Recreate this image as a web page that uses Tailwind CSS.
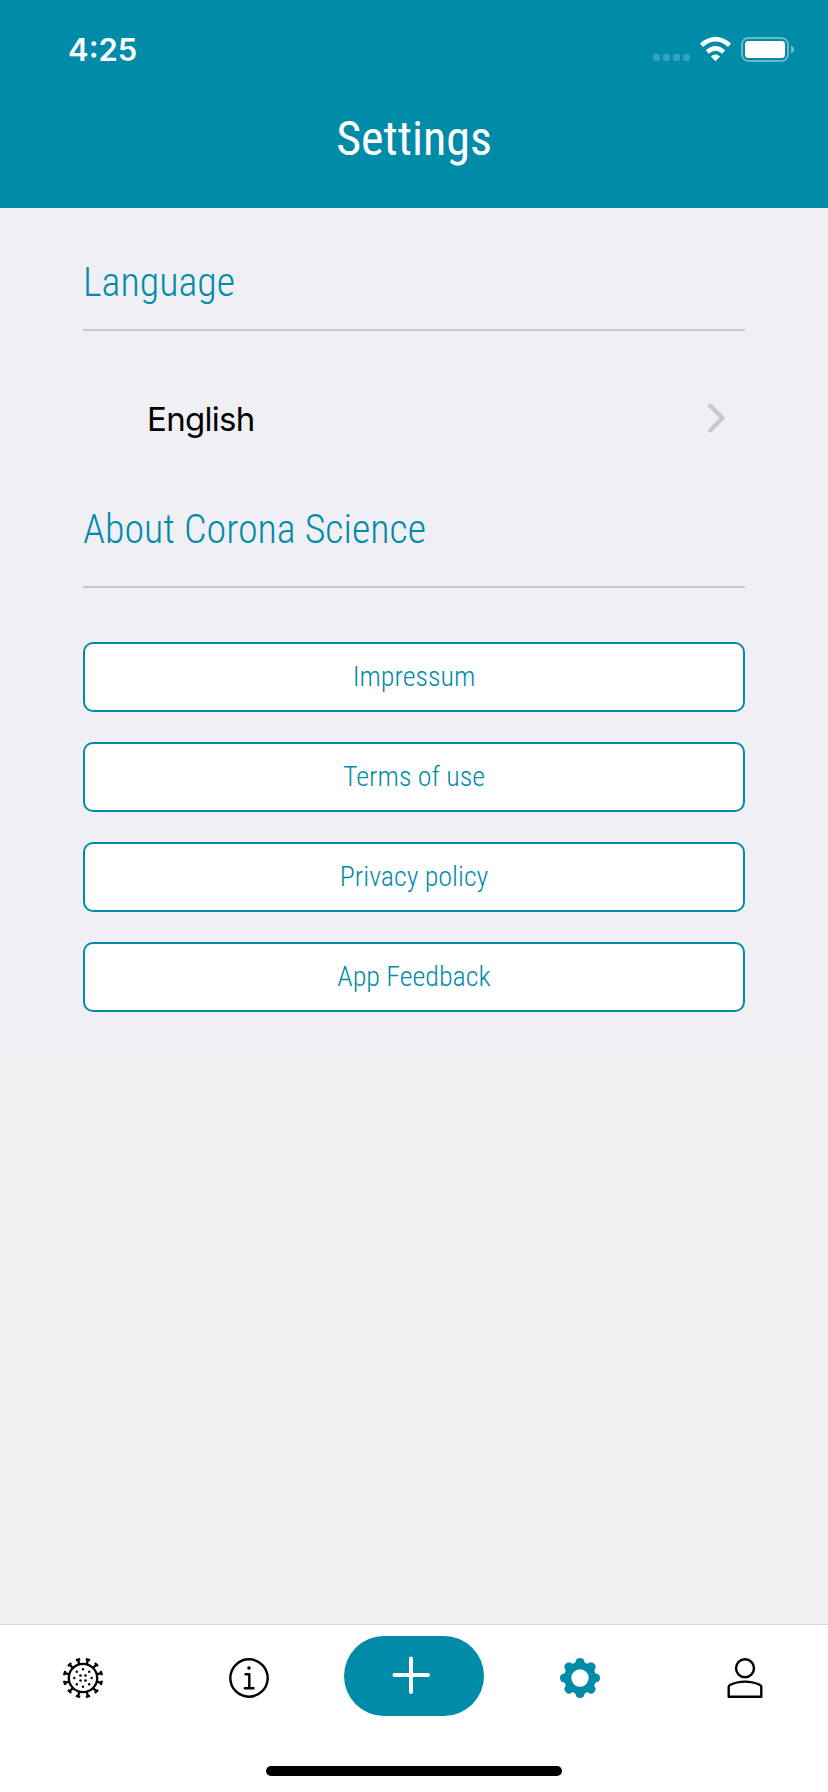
<!DOCTYPE html>
<html lang="en">
<head>
<meta charset="utf-8">
<title>Settings</title>
<script src="https://cdn.jsdelivr.net/npm/@tailwindcss/browser@4"></script>
</head>
<body class="bg-[#f1f1f1]">
<div class="w-[828px] h-[1792px] flex flex-col overflow-hidden font-['Roboto',sans-serif] font-stretch-condensed">
  <header class="h-52 bg-[#008ba9] text-white flex flex-col">
    <div class="h-[100px] flex justify-between pl-[68px] pr-[34px]">
      <div class="font-['Inter',sans-serif] font-stretch-normal font-semibold text-[31px] leading-[100px]">4:25</div>
      <svg class="w-[142px] h-[100px]" viewBox="652 0 142 100" fill="none">
        <g fill="#fff" fill-opacity=".2"><rect x="653" y="54" width="7" height="7" rx="2"/><rect x="663" y="54" width="7" height="7" rx="2"/><rect x="673" y="54" width="7" height="7" rx="2"/><rect x="683" y="54" width="7" height="7" rx="2"/></g>
        <path d="M701.500 45.200Q715.500 33 729.500 45.200M707.300 52Q715.500 44.800 723.700 52" stroke="#fff" stroke-width="4.600"/>
        <path d="M715.500 61.200l-4.600-4.700q4.600-3.900 9.200 0z" fill="#fff"/>
        <rect x="742" y="38" width="46" height="23" rx="6.500" stroke="#fff" stroke-opacity=".4" stroke-width="2"/>
        <rect x="745" y="41" width="40" height="17" rx="3.500" fill="#fff"/>
        <path d="M791 45.500q3 1.200 3 4t-3 4z" fill="#fff" fill-opacity=".45"/>
      </svg>
    </div>
    <h1 class="text-center text-[48px] leading-[78px] font-[370]">Settings</h1>
  </header>

  <main class="h-[853px] bg-[#efeff4] px-[83px] text-[#008ba9] font-light">
    <h2 class="h-[123px] pt-[45px] border-b-2 border-[#c8c8cc] text-[40px] leading-[60px]">Language</h2>
    <div class="h-[168px] pl-[64px] pr-[20px] pt-[10px] flex items-center justify-between font-['Inter',sans-serif] font-stretch-normal font-normal text-black text-[33px] tracking-[-0.7px]">
      <span>English</span>
      <svg class="w-[18px] h-[30px] -mt-1" viewBox="0 0 18 30" fill="none" stroke="#c7c7cc" stroke-width="4" stroke-linecap="round" stroke-linejoin="round"><path d="M3 2.500L15.500 15L3 27.500"/></svg>
    </div>
    <h2 class="h-[89px] border-b-2 border-[#c8c8cc] text-[40px] leading-[62px]">About Corona Science</h2>
    <div class="mt-[54px] flex flex-col gap-[30px] text-[28px]">
      <button class="h-[70px] bg-white border-2 border-[#008ba9] rounded-[10px]">Impressum</button>
      <button class="h-[70px] bg-white border-2 border-[#008ba9] rounded-[10px]">Terms of use</button>
      <button class="h-[70px] bg-white border-2 border-[#008ba9] rounded-[10px]">Privacy policy</button>
      <button class="h-[70px] bg-white border-2 border-[#008ba9] rounded-[10px]">App Feedback</button>
    </div>
  </main>
  <div class="flex-1"></div>

  <nav class="h-[168px] bg-white border-t border-[#d8d8d8] flex flex-col items-center">
    <div class="h-[106px] w-full flex items-center justify-between px-[63px]">
      <svg class="w-10 h-10" viewBox="-20 -20 40 40" fill="none" stroke="#000" stroke-width="2.300">
        <circle r="14.200"/>
        <g id="spikes"></g>
        <g fill="#000" stroke="none"><circle cx="-2.500" cy="-2.500" r="1.300"/><circle cx="2.500" cy="-2.500" r="1.300"/><circle cx="-2.500" cy="2.500" r="1.300"/><circle cx="2.500" cy="2.500" r="1.300"/><circle cy="-8.700" r="1.200"/><circle cy="8.700" r="1.200"/><circle cx="-8.700" r="1.200"/><circle cx="8.700" r="1.200"/><circle cx="6.200" cy="6.200" r="1.200"/><circle cx="-6.200" cy="6.200" r="1.200"/><circle cx="6.200" cy="-6.200" r="1.200"/><circle cx="-6.200" cy="-6.200" r="1.200"/></g>
      </svg>
      <svg class="w-10 h-10 ml-[126px]" viewBox="0 0 40 40" fill="none" stroke="#000" stroke-width="2.400" stroke-linecap="round" stroke-linejoin="round"><circle cx="20" cy="20" r="18.700"/><path d="M16.500 16.200H20.300V30.300M15.800 30.300H24.500"/><circle cx="20" cy="10" r="1.800" fill="#000" stroke="none"/></svg>
      <div class="w-[140px] h-20 -mt-1 ml-[75px] mr-[76px] rounded-full bg-[#008ba9] flex justify-center pt-[20px] pr-[6px]">
        <svg class="w-[38px] h-[38px]" viewBox="0 0 38 38" stroke="#fff" stroke-width="4" stroke-linecap="round"><path d="M19 2.500V36M2.500 19H36"/></svg>
      </div>
      <svg class="w-10 h-10 mr-[125px]" viewBox="-20 -20 40 40" fill="#008ba9">
        <circle r="12.300" fill="none" stroke="#008ba9" stroke-width="7.200"/>
        <g id="teeth"></g>
      </svg>
      <svg class="w-10 h-10" viewBox="0 0 40 40" fill="none" stroke="#000" stroke-width="2.400" stroke-linejoin="round"><circle cx="20" cy="10.200" r="9"/><path d="M3.700 38.800V29Q3.700 27.600 5 27C14 22.500 26 22.500 35 27Q36.300 27.600 36.300 29V38.800Z"/></svg>
    </div>
    <div class="mt-[35px] w-[296px] h-[10px] rounded-full bg-black"></div>
  </nav>
</div>
<script>
  const icon = (id, count, offset, d) => {
    document.getElementById(id).innerHTML = Array.from({length: count}, (_, i) =>
      `<path d="${d}" transform="rotate(${offset + i * 360 / count})"/>`).join('');
  };
  icon('spikes', 12, 15, 'M0-14V-18.800M-2.200-19H2.200');
  icon('teeth', 8, 0, 'M-7-13.500Q-4.300-14.500-4.100-17.300Q-3.500-20 0-20T4.100-17.300Q4.300-14.500 7-13.500Z');
</script>
</body>
</html>
